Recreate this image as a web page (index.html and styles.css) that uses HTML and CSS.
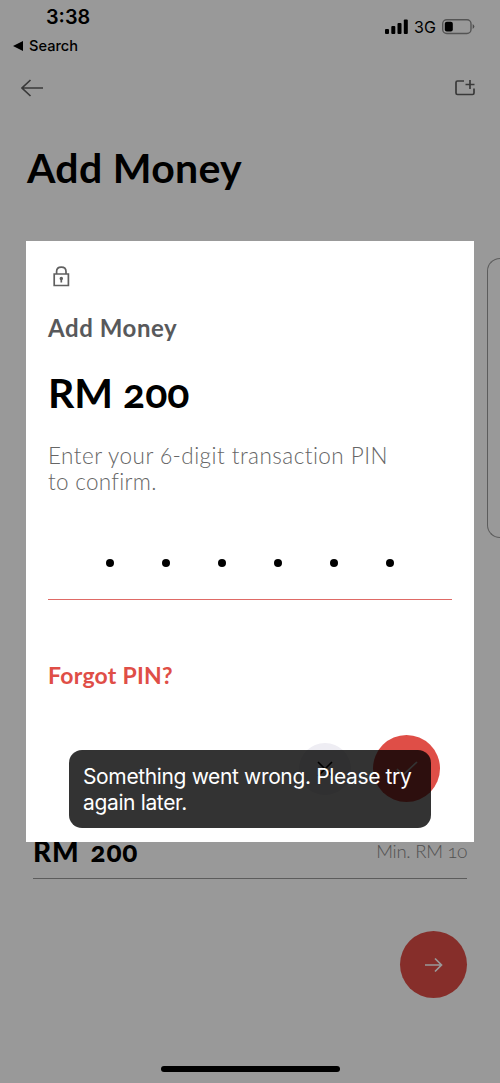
FILE: index.html
```html
<!DOCTYPE html>
<html lang="en">
<head>
<meta charset="utf-8">
<title>Add Money</title>
<link rel="stylesheet" href="styles.css">
</head>
<body>
<div class="screen">
  <header class="status">
    <div class="status-left">
      <div class="time">3:38</div>
      <div class="back-app"><svg width="10" height="10" viewBox="0 0 10 10"><path d="M0 5L10 0V10Z"/></svg><span>Search</span></div>
    </div>
    <div class="status-right">
      <svg width="23" height="16" viewBox="0 0 23 16"><rect y="10" width="4" height="5" rx="1"/><rect x="6.3" y="7" width="4" height="8" rx="1"/><rect x="12.5" y="4" width="4" height="11" rx="1"/><rect x="18.8" y="0.5" width="4" height="14.5" rx="1"/></svg>
      <span class="network">3G</span>
      <svg width="33" height="16" viewBox="0 0 33 16"><rect x="0.7" y="0.7" width="28.3" height="13.8" rx="4" fill="none" stroke="#000" stroke-opacity=".45" stroke-width="1.4"/><rect x="2.8" y="2.8" width="8" height="9.6" rx="2"/><path d="M30.7 5Q34 7.5 30.7 10Z" opacity=".5"/></svg>
    </div>
  </header>
  <nav class="nav">
    <svg width="23" height="18" viewBox="0 0 23 18" class="line-icon"><path d="M22 9H1M9.5 1L1 9L9.5 17"/></svg>
    <svg width="21" height="17" viewBox="0 0 21 17" class="line-icon"><path d="M9 2H2.5Q1 2 1 3.5V14Q1 15.5 2.5 15.5H17.5Q19 15.5 19 14V9.5M10.5 5.5H19.5M15 1V10"/></svg>
  </nav>
  <h1 class="title">Add Money</h1>
  <div class="card-row"><div class="card-edge"></div></div>
  <div class="amount-row"><strong class="amount">RM 200</strong><span class="minimum">Min. RM 10</span></div>
  <div class="next-row"><div class="circle"><svg width="19" height="16" viewBox="0 0 19 16" class="arrow"><path d="M1 8H17.5M11 1.5L17.5 8L11 14.5"/></svg></div></div>
  <div class="scrim"></div>
  <section class="dialog">
    <svg width="17" height="21" viewBox="0 0 17 21" class="lock"><path d="M1.2 8H15.4V19.5H1.2ZM3.6 8V5.5Q3.6 1.2 8.3 1.2Q13 1.2 13 5.5V8"/><path d="M8.3 12.5V16.5"/><circle cx="8.3" cy="12.4" r="0.9"/></svg>
    <h2 class="dialog-title">Add Money</h2>
    <div class="dialog-amount">RM 200</div>
    <p class="prompt">Enter your 6-digit transaction PIN<br><span class="prompt-end">to confirm.</span></p>
    <div class="pin"><i></i><i></i><i></i><i></i><i></i><i></i></div>
    <div class="forgot"><span>Forgot PIN?</span></div>
    <div class="actions">
      <div class="cancel"><svg width="16" height="16" viewBox="0 0 16 16"><path d="M1 1L15 15M15 1L1 15"/></svg></div>
      <div class="circle"><svg width="22" height="15" viewBox="0 0 22 15" class="check"><path d="M1 8L7 14L21 1"/></svg></div>
    </div>
  </section>
  <div class="toast">Something went wrong. Please try<br>again later.</div>
  <div class="home"></div>
</div>
</body>
</html>
```
FILE: styles.css
```css
* { box-sizing: border-box; margin: 0; padding: 0; }
body { background: #fff; }
svg { display: block; }
.screen { position: relative; width: 500px; height: 1083px; overflow: hidden; background: #fff; font-family: Lato, sans-serif; font-variant-numeric: oldstyle-nums; color: #000; display: flex; flex-direction: column; }
.status { height: 64px; display: flex; justify-content: space-between; padding: 6px 25px 0 13px; font-family: Inter, sans-serif; font-variant-numeric: lining-nums; }
.time { margin-left: 33px; font-size: 19.8px; line-height: 23px; font-weight: 600; }
.back-app { display: flex; align-items: center; gap: 6px; margin-top: 7px; font-size: 14.6px; line-height: 20px; font-weight: 500; }
.status-right { display: flex; align-items: center; height: 42px; }
.network { width: 23px; margin: 0 5px 0 6px; font-size: 16px; font-weight: 400; }
.nav { height: 47px; display: flex; justify-content: space-between; align-items: center; padding: 0 24px 0 21px; }
.line-icon { fill: none; stroke: #606060; stroke-width: 1.7; }
.title { height: 147px; padding: 33px 27px 0; font-size: 41px; line-height: 48px; font-weight: 700; letter-spacing: .3px; white-space: nowrap; }
.card-row { height: 280px; display: flex; justify-content: flex-end; }
.card-edge { width: 13px; height: 280px; border: 1px solid #999; border-right: 0; border-radius: 16px 0 0 16px; }
.amount-row { height: 54px; margin: 287px 33px 0; border-bottom: 1px solid #999; display: flex; justify-content: space-between; align-items: flex-end; padding-bottom: 12px; line-height: 30px; white-space: nowrap; }
.amount { font-size: 28px; font-weight: 900; letter-spacing: .7px; word-spacing: 4px; }
.minimum { font-size: 18.5px; font-weight: 300; letter-spacing: -.25px; color: #888; }
.next-row { display: flex; justify-content: flex-end; padding: 52px 33px 0; }
.circle { width: 67px; height: 67px; border-radius: 50%; background: #df4e47; display: flex; align-items: center; justify-content: center; }
.arrow, .check { fill: none; stroke: #fff; stroke-width: 1.7; }
.scrim { position: absolute; inset: 0; background: rgba(0, 0, 0, .4); }
.dialog { position: absolute; left: 26px; top: 241px; width: 448px; height: 601px; background: #fff; padding: 25px 22px 0; white-space: nowrap; }
.lock { fill: none; stroke: #606060; stroke-width: 1.7; margin-left: 5px; }
.dialog-title { margin-top: 27px; font-size: 24px; line-height: 28px; letter-spacing: .55px; color: #58595b; font-weight: 700; }
.dialog-amount { margin-top: 26px; font-size: 41px; line-height: 50px; font-weight: 700; }
.prompt { margin-top: 25px; font-size: 22.5px; line-height: 26px; letter-spacing: .46px; font-weight: 300; color: #666; }
.prompt-end { letter-spacing: .3px; }
.pin { height: 109px; margin-top: -4px; border-bottom: 1.5px solid #df6a66; display: flex; justify-content: center; gap: 48px; padding-top: 68px; padding-right: 1px; }
.pin i { width: 8px; height: 8px; border-radius: 50%; background: #000; }
.forgot { margin-top: 61px; font-size: 23px; line-height: 28px; letter-spacing: .25px; color: #df4e47; font-weight: 700; }
.actions { display: flex; justify-content: flex-end; align-items: center; gap: 22px; margin-top: 46px; padding-right: 12px; }
.cancel { width: 52px; height: 52px; border-radius: 50%; background: #eeedf3; display: flex; align-items: center; justify-content: center; }
.cancel svg { fill: none; stroke: #000; stroke-width: 1.6; }
.toast { position: absolute; left: 69px; top: 750px; width: 362px; height: 78px; border-radius: 13px; background: rgba(0, 0, 0, .8); color: #fff; font-family: Inter, sans-serif; font-size: 21px; line-height: 26px; letter-spacing: -.36px; padding: 14px; white-space: nowrap; }
.home { position: absolute; left: 161px; top: 1066px; width: 179px; height: 6px; border-radius: 3px; background: #000; }
```
